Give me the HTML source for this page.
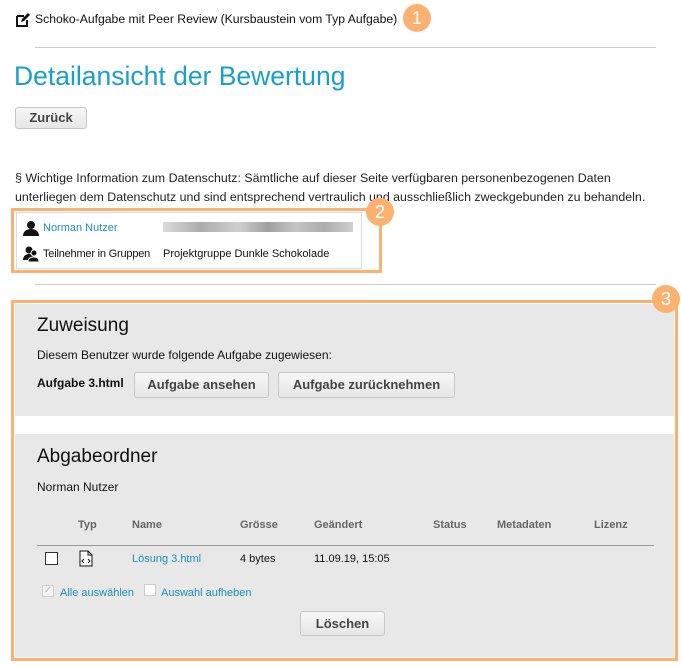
<!DOCTYPE html>
<html><head><meta charset="utf-8"><style>
*{margin:0;padding:0;box-sizing:border-box}
body{width:681px;height:667px;background:#fff;font-family:"Liberation Sans",Arial,sans-serif;color:#222;position:relative;overflow:hidden;font-size:12px}
.a{position:absolute;white-space:nowrap}
.badge{position:absolute;width:28px;height:28px;border-radius:50%;background:#fbb170;color:#fff;font-size:18px;text-align:center;line-height:28px}
.btn{position:absolute;background:linear-gradient(#f7f7f7,#e6e6e6);border:1px solid #c8c8c8;border-radius:3px;font-weight:bold;font-size:13px;color:#444;text-align:center}
.link{color:#1a8fb5}
.th{position:absolute;top:519px;font-weight:bold;color:#666;font-size:11px}
</style></head><body>
<svg class="a" style="left:15px;top:12px" width="16" height="16" viewBox="0 0 16 16"><path d="M2 4h7M2 4v10h10V8" fill="none" stroke="#111" stroke-width="2"/><path d="M6 10l1-3 6-6 2 2-6 6z" fill="#111"/></svg>
<div class="a" style="left:35px;top:12px;font-size:12.2px;color:#111">Schoko-Aufgabe mit Peer Review (Kursbaustein vom Typ Aufgabe)</div>
<div class="badge" style="left:403px;top:4px">1</div>
<div class="a" style="left:35px;top:47px;width:621px;height:1px;background:#ccc"></div>
<div class="a" style="left:14px;top:61px;font-size:26.5px;color:#1a9fc9">Detailansicht der Bewertung</div>
<div class="btn" style="left:15px;top:107px;width:72px;height:22px;line-height:19px">Zurück</div>
<div class="a" style="left:15px;top:169px;font-size:12.4px;line-height:19px;color:#222">§ Wichtige Information zum Datenschutz: Sämtliche auf dieser Seite verfügbaren personenbezogenen Daten<br>unterliegen dem Datenschutz und sind entsprechend vertraulich und ausschließlich zweckgebunden zu behandeln.</div>
<div class="a" style="left:11px;top:208px;width:371px;height:65px;border:3px solid #fbb170"></div>
<div class="a" style="left:16px;top:212px;width:346px;height:57px;border:1px solid #ddd"></div>
<svg class="a" style="left:23px;top:220px" width="16" height="16" viewBox="0 0 16 16"><circle cx="8" cy="5" r="4" fill="#111"/><path d="M0 16c0-5 4-7 8-7s8 2 8 7z" fill="#111"/></svg>
<div class="a link" style="left:43px;top:222px;font-size:11px">Norman Nutzer</div>
<div class="a" style="left:163px;top:222px;width:190px;height:10px;background:linear-gradient(90deg,#ccc,#888 20%,#bbb 40%,#777 55%,#aaa 70%,#888 85%,#bbb);opacity:.7"></div>
<svg class="a" style="left:23px;top:246px" width="16" height="16" viewBox="0 0 16 16"><circle cx="6" cy="4" r="3.5" fill="#111"/><path d="M0 14c0-4 3-6 6-6s6 2 6 6z" fill="#111"/><circle cx="11" cy="7" r="3" fill="#111" stroke="#fff"/><path d="M5 16c0-4 3-5 6-5s5 1 5 5z" fill="#111" stroke="#fff"/></svg>
<div class="a" style="left:43px;top:248px;font-size:11px;color:#111;letter-spacing:-0.2px">Teilnehmer in Gruppen</div>
<div class="a" style="left:163px;top:248px;font-size:11px;color:#111">Projektgruppe Dunkle Schokolade</div>
<div class="badge" style="left:366px;top:198px">2</div>
<div class="a" style="left:35px;top:284px;width:621px;height:1px;background:#ccc"></div>
<div class="a" style="left:11px;top:300px;width:667px;height:361px;border:3px solid #fbb170"></div>
<div class="a" style="left:15px;top:304px;width:659px;height:112px;background:#e8e8e8"></div>
<div class="a" style="left:15px;top:434px;width:659px;height:223px;background:#e8e8e8"></div>
<div class="badge" style="left:652px;top:285px">3</div>
<div class="a" style="left:37px;top:315px;font-size:19px;color:#111">Zuweisung</div>
<div class="a" style="left:37px;top:348px;font-size:12px;color:#111">Diesem Benutzer wurde folgende Aufgabe zugewiesen:</div>
<div class="a" style="left:37px;top:376px;font-size:12px;font-weight:bold;color:#111">Aufgabe 3.html</div>
<div class="btn" style="left:134px;top:372px;width:135px;height:26px;line-height:24px">Aufgabe ansehen</div>
<div class="btn" style="left:278px;top:372px;width:177px;height:26px;line-height:24px">Aufgabe zurücknehmen</div>
<div class="a" style="left:37px;top:446px;font-size:19px;color:#111">Abgabeordner</div>
<div class="a" style="left:37px;top:480px;font-size:12px;color:#111">Norman Nutzer</div>
<div class="th" style="left:78px">Typ</div>
<div class="th" style="left:132px">Name</div>
<div class="th" style="left:240px">Grösse</div>
<div class="th" style="left:314px">Geändert</div>
<div class="th" style="left:433px">Status</div>
<div class="th" style="left:497px">Metadaten</div>
<div class="th" style="left:594px">Lizenz</div>
<div class="a" style="left:37px;top:545px;width:617px;height:1px;background:#999"></div>
<div class="a" style="left:45px;top:552px;width:13px;height:13px;border:1px solid #333;background:#fff"></div>
<svg class="a" style="left:79px;top:550px" width="14" height="17" viewBox="0 0 14 17"><path d="M1 1h8l4 4v11H1z" fill="#fff" stroke="#111"/><path d="M9 1v4h4M5 9l-2 2 2 2M9 9l2 2-2 2" fill="none" stroke="#111"/></svg>
<div class="a link" style="left:132px;top:553px;font-size:11px">Lösung 3.html</div>
<div class="a" style="left:240px;top:553px;font-size:11px;color:#111">4 bytes</div>
<div class="a" style="left:314px;top:553px;font-size:11px;color:#111">11.09.19, 15:05</div>
<div class="a" style="left:42px;top:585px;width:12px;height:12px;border:1px solid #ccc;background:#f4f4f4;color:#bbb;font-size:10px;line-height:10px;text-align:center">✓</div>
<div class="a link" style="left:60px;top:587px;font-size:11px">Alle auswählen</div>
<div class="a" style="left:144px;top:584px;width:12px;height:12px;border:1px solid #ccc;background:#fff"></div>
<div class="a link" style="left:161px;top:587px;font-size:11px">Auswahl aufheben</div>
<div class="btn" style="left:300px;top:611px;width:85px;height:25px;line-height:23px">Löschen</div>
</body></html>
